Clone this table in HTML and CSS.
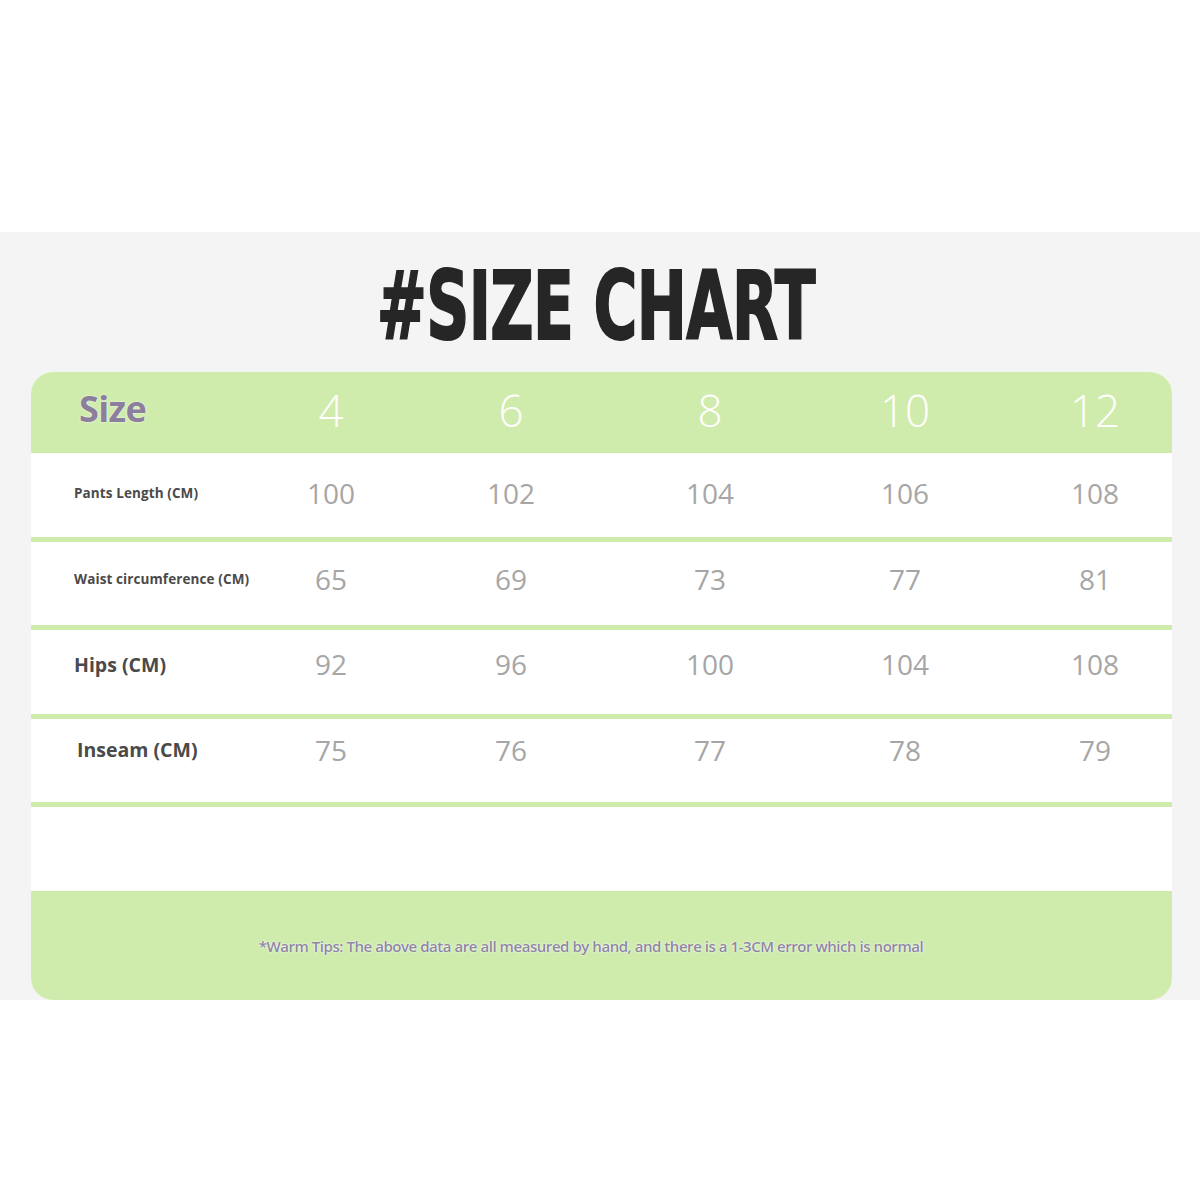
FILE: index.html
```html
<!DOCTYPE html>
<html>
<head>
<meta charset="utf-8">
<link rel="stylesheet" href="styles.css">
</head>
<body>
<div class="top"></div>
<section class="panel">
  <h1 class="title"><span class="title-text">#SIZE CHART</span></h1>
  <div class="card">
    <div class="row head">
      <div class="label size">Size</div>
      <div class="num">4</div>
      <div class="num">6</div>
      <div class="num">8</div>
      <div class="num">10</div>
      <div class="num last">12</div>
    </div>
    <div class="row tall">
      <div class="label small">Pants Length (CM)</div>
      <div class="num">100</div>
      <div class="num">102</div>
      <div class="num">104</div>
      <div class="num">106</div>
      <div class="num last">108</div>
    </div>
    <div class="line"></div>
    <div class="row r2">
      <div class="label small">Waist circumference (CM)</div>
      <div class="num">65</div>
      <div class="num">69</div>
      <div class="num">73</div>
      <div class="num">77</div>
      <div class="num last">81</div>
    </div>
    <div class="line"></div>
    <div class="row tall r3">
      <div class="label big">Hips (CM)</div>
      <div class="num">92</div>
      <div class="num">96</div>
      <div class="num">100</div>
      <div class="num">104</div>
      <div class="num last">108</div>
    </div>
    <div class="line"></div>
    <div class="row r4">
      <div class="label big inseam">Inseam (CM)</div>
      <div class="num">75</div>
      <div class="num">76</div>
      <div class="num">77</div>
      <div class="num">78</div>
      <div class="num last">79</div>
    </div>
    <div class="line"></div>
    <div class="empty"></div>
    <div class="foot">
      <p class="tips">*Warm Tips: The above data are all measured by hand, and there is a 1-3CM error which is normal</p>
    </div>
  </div>
</section>
</body>
</html>
```

FILE: styles.css
```css
html, body {
  margin: 0;
  padding: 0;
  background: #ffffff;
}
body {
  font-family: "Open Sans", "Noto Sans", sans-serif;
}
.top {
  height: 232px;
}
.panel {
  background: #f4f4f4;
  padding: 0 28px 0 31px;
  height: 768px;
  box-sizing: border-box;
  display: flex;
  flex-direction: column;
}
.title {
  margin: 0;
  height: 140px;
  display: flex;
  align-items: center;
  justify-content: center;
  overflow: hidden;
}
.title-text {
  display: inline-block;
  font-family: "DejaVu Sans", sans-serif;
  font-weight: bold;
  font-size: 95px;
  line-height: 1;
  color: #262626;
  transform: scaleX(0.63);
  letter-spacing: -1px;
  -webkit-text-stroke: 2px #262626;
  white-space: nowrap;
  margin-top: 8px;
  margin-left: -12px;
}
.card {
  flex: 1;
  background: #ffffff;
  border-radius: 22px;
  overflow: hidden;
  display: flex;
  flex-direction: column;
}
.row {
  display: grid;
  grid-template-columns: 210px 180px 180px 218px 172px 181px;
  align-items: center;
  height: 83px;
  box-sizing: border-box;
}
.row.tall {
  height: 84px;
}
.row.r2 {
  padding-bottom: 6px;
}
.row.r3 {
  padding-bottom: 12px;
}
.row.r4 {
  padding-bottom: 18px;
}
.row.head {
  background: #d0ecac;
  height: 81px;
}
.line {
  height: 5px;
  background: #d0ecac;
}
.label {
  padding-left: 43px;
  font-weight: 700;
  color: #4a4a4a;
  white-space: nowrap;
}
.label.small {
  font-size: 13.5px;
  letter-spacing: 0.1px;
  margin-top: -4px;
}
.label.big {
  font-size: 19.5px;
  margin-top: -4px;
}
.label.inseam {
  padding-left: 46px;
}
.label.size {
  padding-left: 48px;
  font-size: 36px;
  color: #8b7f9b;
  letter-spacing: -0.6px;
  margin-top: -8px;
  text-shadow: 0 0 2px #ffffff;
}
.num {
  text-align: center;
  font-size: 28px;
  color: #a6a6a6;
  font-weight: 400;
  margin-top: -4px;
}
.head .num {
  font-size: 44px;
  font-weight: 300;
  color: #ffffff;
  margin-top: -6px;
}
.num.last {
  padding-left: 27px;
}
.empty {
  height: 84px;
}
.foot {
  flex: 1;
  background: #d0ecac;
  display: flex;
  align-items: center;
  justify-content: center;
}
.tips {
  margin: 0 0 0 -21px;
  font-family: "Open Sans", sans-serif;
  font-weight: 600;
  font-size: 15px;
  letter-spacing: -0.45px;
  color: #8d87a0;
  text-shadow: 0 0 2px #ffffff, 0 0 1px #ffffff;
}
```
